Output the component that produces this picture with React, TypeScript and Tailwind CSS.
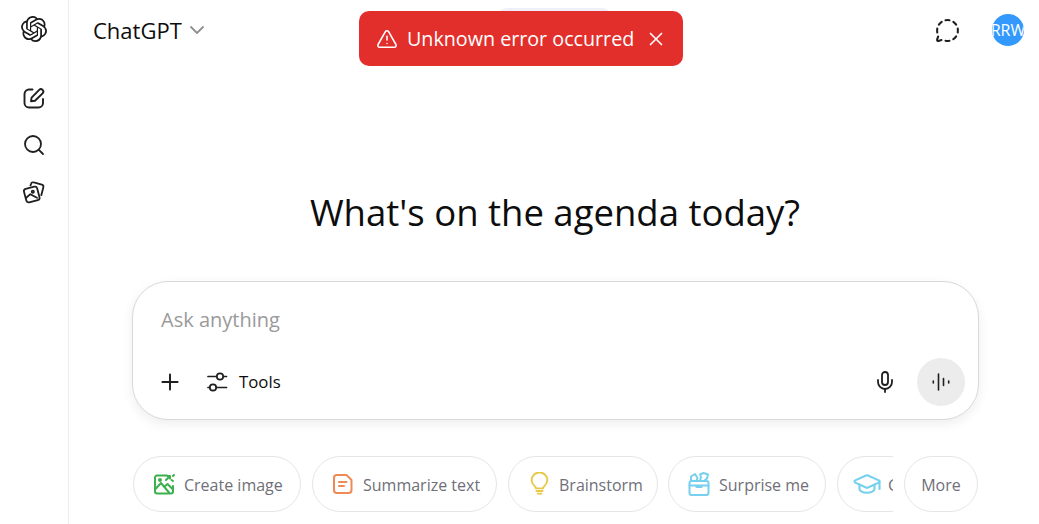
import { ChevronDown, GraduationCap, MessageCircleDashed, Mic, Plus, Search, TriangleAlert, X } from 'lucide-react'
import { SiOpenai } from 'react-icons/si'
import type { ReactNode } from 'react'

const font = { fontFamily: '"Open Sans", "Noto Sans", sans-serif' }

function EditIcon() {
  return (
    <svg width="24" height="24" viewBox="0 0 24 24" fill="none" stroke="#1f1f1f" strokeWidth="1.9" strokeLinecap="round" strokeLinejoin="round">
      <path d="M10.500 3.500H7a4.500 4.500 0 0 0-4.500 4.500v9A4.500 4.500 0 0 0 7 21.500h9.500a4.500 4.500 0 0 0 4.500-4.500v-4" />
      <path d="M9 15.200l.6-3.600L17.200 3.900a2.400 2.400 0 0 1 3.400 3.400L13 14.700z" />
    </svg>
  )
}

function ImagesIcon() {
  return (
    <svg width="24" height="24" viewBox="0 0 24 24" fill="none" stroke="#1f1f1f" strokeWidth="1.800" strokeLinecap="round" strokeLinejoin="round">
      <path d="M8.500 5.500l.5-1.600A2.200 2.200 0 0 1 11.800 2.400l8 2.300a2.200 2.200 0 0 1 1.500 2.700l-2 7.800" />
      <path d="M3.700 8.900l8.600-2.200a2.400 2.400 0 0 1 2.900 1.700l2.300 8.800a2.400 2.400 0 0 1-1.700 2.900L7.200 22.300a2.400 2.400 0 0 1-2.900-1.700L2 11.800a2.400 2.400 0 0 1 1.700-2.900z" />
      <circle cx="10.800" cy="11.800" r="1.100" />
      <path d="M4 18l4.300-3.800 6.700 3.600" />
    </svg>
  )
}

function SlidersIcon() {
  return (
    <svg width="22" height="22" viewBox="0 0 22 22" fill="none" stroke="#1f1f1f" strokeWidth="1.700" strokeLinecap="round">
      <path d="M2 5.500h8.500M17.500 5.500h3M2 16.500h1.500M10.500 16.500h10" />
      <circle cx="14" cy="5.500" r="3.200" />
      <circle cx="7" cy="16.500" r="3.200" />
    </svg>
  )
}

function VoiceIcon() {
  return (
    <svg width="20" height="20" viewBox="0 0 20 20" fill="none" stroke="#1f1f1f" strokeWidth="1.600" strokeLinecap="round">
      <path d="M7.500 2v16M12.500 6.500v7M2.300 9v2M17.700 9v2" />
    </svg>
  )
}

function CreateImageIcon() {
  return (
    <svg width="24" height="24" viewBox="0 0 24 24" fill="none" stroke="#3cb04d" strokeWidth="2" strokeLinecap="round" strokeLinejoin="round">
      <path d="M15 3.500H5a2 2 0 0 0-2 2v14a2 2 0 0 0 2 2h14a2 2 0 0 0 2-2v-5.500" />
      <path d="M3.500 17l5.500-6 8 9.500" />
      <path d="M12.500 14.500l3-2.500 5 5" />
      <circle cx="8" cy="8" r="1" />
      <path d="M14 8l4-4M18 4h-2.500M18 4v2.500M22 3l-1 1M21 9l-1.500-1" />
    </svg>
  )
}

function SummarizeIcon() {
  return (
    <svg width="22" height="24" viewBox="0 0 22 24" fill="none" stroke="#ee8a54" strokeWidth="2" strokeLinecap="round" strokeLinejoin="round">
      <path d="M5 3h9.500L19.500 8v10a3 3 0 0 1-3 3H5a3 3 0 0 1-3-3V6a3 3 0 0 1 3-3z" />
      <path d="M7 10h7.500M7 14h5" />
    </svg>
  )
}

function BulbIcon() {
  return (
    <svg width="21" height="24" viewBox="0 0 24 26" fill="none" stroke="#e8c94a" strokeWidth="2.200" strokeLinecap="round" strokeLinejoin="round">
      <path d="M8 18c0-2.500-5-3.800-5-9.200a9 9 0 0 1 18 0c0 5.400-5 6.700-5 9.200z" />
      <path d="M8.500 21h7M10 24h4" />
    </svg>
  )
}

function SurpriseIcon() {
  return (
    <svg width="24" height="26" viewBox="0 0 24 26" fill="none" stroke="#76d0ee" strokeWidth="2" strokeLinecap="round" strokeLinejoin="round">
      <rect x="2.500" y="10" width="19" height="14" rx="2" />
      <path d="M2.500 14.500h19M9.500 14.500v1.500h5v-1.500" />
      <path d="M4 10V5.500L8 3l2.500 4-1 3M13 10l1-4-1-2.500L16.500 2 21 3.500l-1 4-3 2.500" />
    </svg>
  )
}

function Chip({ icon, label, className }: { icon: ReactNode; label: string; className: string }) {
  return (
    <div className={`flex h-[56px] shrink-0 items-center gap-2 rounded-full border border-[#e5e5e5] bg-white pl-[18px] text-[16px] text-[#6f6f78] ${className}`}>
      <span className="flex w-[24px] shrink-0 justify-center">{icon}</span>
      <span className="pt-[2px] whitespace-nowrap">{label}</span>
    </div>
  )
}

export default function App() {
  return (
    <div className="flex h-[524px] w-[1039px] overflow-hidden bg-white text-[#0d0d0d]" style={font}>
      <aside className="flex w-[69px] shrink-0 flex-col items-center border-r border-[#ececec] pt-[16px]">
        <SiOpenai size={26} color="#1a1a1a" />
        <div className="mt-[44px] flex flex-col items-center gap-[23px]">
          <EditIcon />
          <Search size={24} color="#1f1f1f" strokeWidth={1.8} />
          <ImagesIcon />
        </div>
      </aside>

      <main className="relative flex min-w-0 flex-1 flex-col">
        <header className="flex h-[60px] items-center justify-between pr-[15px] pl-[24px]">
          <div className="flex items-center gap-[3px]">
            <span className="text-[22px]">ChatGPT</span>
            <ChevronDown size={24} color="#8f8f8f" strokeWidth={1.8} />
          </div>
          <div className="flex items-center gap-[32px]">
            <MessageCircleDashed size={25} color="#1f1f1f" strokeWidth={2} />
            <div className="flex h-[32px] w-[32px] items-center justify-center overflow-hidden rounded-full bg-[#3399ff] text-[16px] text-white">
              RRW
            </div>
          </div>
        </header>

        <div className="absolute top-[8px] left-[428px] h-[20px] w-[115px] rounded-full bg-[#efeffa]" />
        <div className="absolute top-[11px] left-[290px] flex h-[55px] w-[324px] items-center rounded-[10px] bg-[#e32f2c] pl-[17px] text-white">
          <TriangleAlert size={22} strokeWidth={1.7} />
          <span className="ml-[9px] text-[19.700px]">Unknown error occurred</span>
          <X size={22} strokeWidth={1.8} className="mr-[16px] ml-auto" />
        </div>

        <h1 className="mt-[124px] pl-[2px] text-center text-[36.500px] leading-[56px] font-normal text-[#0d0d0d]">What's on the agenda today?</h1>

        <section className="mt-[41px] ml-[63px] flex h-[139px] w-[847px] flex-col rounded-[36px] border border-[#d9d9d9] bg-white pt-[24px] pr-[13px] pb-[13px] pl-[20px] shadow-[0_4px_12px_rgba(0,0,0,0.07)]">
          <div className="pl-[8px] text-[20px] leading-[28px] text-[#9a9a9a]">Ask anything</div>
          <div className="mt-auto flex items-center">
            <Plus size={26} color="#1f1f1f" strokeWidth={1.8} className="ml-[4px]" />
            <div className="ml-[23px] flex items-center gap-[11px]">
              <SlidersIcon />
              <span className="text-[16.800px]">Tools</span>
            </div>
            <Mic size={24} color="#1f1f1f" strokeWidth={1.8} className="mr-[20px] ml-auto" />
            <div className="flex h-[48px] w-[48px] items-center justify-center rounded-full bg-[#ececec]">
              <VoiceIcon />
            </div>
          </div>
        </section>

        <div className="mt-[36px] ml-[64px] flex w-[845px] items-start gap-[11px] overflow-hidden">
          <Chip icon={<CreateImageIcon />} label="Create image" className="w-[168px]" />
          <Chip icon={<SummarizeIcon />} label="Summarize text" className="w-[185px]" />
          <Chip icon={<BulbIcon />} label="Brainstorm" className="w-[150px]" />
          <Chip icon={<SurpriseIcon />} label="Surprise me" className="-ml-px w-[158px]" />
          <div className="flex w-[56px] shrink-0 overflow-hidden">
            <Chip icon={<GraduationCap size={30} color="#76d0ee" strokeWidth={1.7} className="-ml-[3px] shrink-0" />} label="Get advice" className="w-[150px]" />
          </div>
          <div className="flex h-[56px] w-[74px] shrink-0 items-center justify-center rounded-full border border-[#e5e5e5] bg-white pt-[2px] text-[16px] text-[#6f6f78]">
            More
          </div>
        </div>
      </main>
    </div>
  )
}
